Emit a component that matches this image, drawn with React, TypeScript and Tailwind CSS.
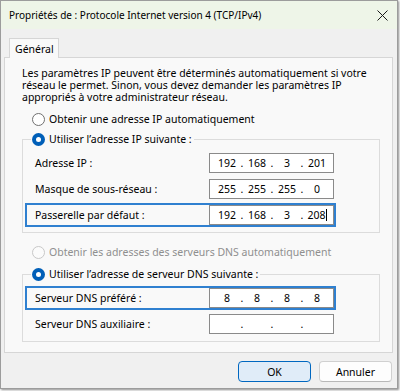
import React from "react";

function Radio({ checked, disabled }: { checked?: boolean; disabled?: boolean }) {
  if (checked) {
    return (
      <span className="w-[13px] h-[13px] rounded-full bg-[#005fb8] flex items-center justify-center shrink-0">
        <span className="w-[5px] h-[5px] rounded-full bg-white" />
      </span>
    );
  }
  return (
    <span
      className={
        disabled
          ? "w-[13px] h-[13px] rounded-full border border-[#c8c8c8] bg-[#fbfbfb] shrink-0"
          : "w-[13px] h-[13px] rounded-full border border-[#707070] bg-white shrink-0"
      }
    />
  );
}

function IpInput({ octets, caret }: { octets: string[]; caret?: boolean }) {
  const slot = (v: string, last: boolean) => (
    <span className="w-[22px] flex justify-center items-center">
      <span>{v}</span>
      {last && caret ? <span className="w-[1px] h-[12px] bg-black" /> : null}
    </span>
  );
  return (
    <div className="w-[125px] h-[20px] border border-[#8a8a8a] bg-white flex items-center pl-[6px]">
      {slot(octets[0], false)}
      <span className="w-[8px] text-center">.</span>
      {slot(octets[1], false)}
      <span className="w-[8px] text-center">.</span>
      {slot(octets[2], false)}
      <span className="w-[8px] text-center">.</span>
      {slot(octets[3], true)}
    </div>
  );
}

function Row({
  label,
  octets,
  highlight,
  caret,
}: {
  label: string;
  octets: string[];
  highlight?: boolean;
  caret?: boolean;
}) {
  return (
    <div
      className={
        highlight
          ? "ml-[2px] w-[311px] h-[24px] border-2 border-[#2f80d0] flex items-center"
          : "ml-[2px] w-[311px] h-[24px] border-2 border-transparent flex items-center"
      }
    >
      <span className="w-[182px] pl-[8px]">{label}</span>
      <IpInput octets={octets} caret={caret} />
    </div>
  );
}

export default function App() {
  return (
    <div
      className="w-[400px] h-[391px] bg-white text-[10.5px] text-black leading-[12px]"
      style={{ fontFamily: '"Noto Sans", "Open Sans", sans-serif' }}
    >
      <div className="w-[398px] h-[389px] border border-[#9c9c9c] shadow-[1px_1px_2px_rgba(0,0,0,0.45)] flex flex-col bg-[#f0f0f0]">
        {/* Title bar */}
        <div className="h-[28px] bg-[#eef5e8] flex items-center pl-[8px] pr-[9px] shrink-0">
          <span className="flex-1 text-[10px]">Propriétés de : Protocole Internet version 4 (TCP/IPv4)</span>
          <svg width="11" height="11" viewBox="0 0 11 11">
            <path d="M0.5 0.5 L10.5 10.5 M10.5 0.5 L0.5 10.5" stroke="#1a1a1a" strokeWidth="1" />
          </svg>
        </div>

        {/* Body */}
        <div className="flex-1 flex flex-col pl-[3px] pr-[4px] pt-[9px]">
          {/* Tab */}
          <div className="flex">
            <div className="ml-[5px] h-[20px] w-[50px] border border-b-0 border-[#d6d6d6] bg-[#f9f9f9] flex items-center pl-[5px] -mb-[1px] relative z-10">
              Général
            </div>
          </div>
          {/* Panel */}
          <div className="h-[296px] border border-[#d6d6d6] bg-[#f9f9f9] flex flex-col">
            <div className="pl-[17px] pt-[9px] flex flex-col">
              <span className="h-[12px] leading-[12px]">Les paramètres IP peuvent être déterminés automatiquement si votre</span>
              <span className="h-[12px] leading-[12px]">réseau le permet. Sinon, vous devez demander les paramètres IP</span>
              <span className="h-[12px] leading-[12px]">appropriés à votre administrateur réseau.</span>
            </div>

            <div className="mt-[8px] h-[16px] pl-[27px] flex items-center gap-[4px]">
              <Radio />
              <span>Obtenir une adresse IP automatiquement</span>
            </div>

            <fieldset className="mt-[4px] ml-[17px] w-[358px] border border-[#dcdcdc] pt-[4px] pb-[5px]">
              <legend className="ml-[8px] pl-[1px] pr-[2px] h-[16px] flex items-center gap-[4px]">
                <Radio checked />
                <span>Utiliser l’adresse IP suivante :</span>
              </legend>
              <div className="flex flex-col gap-[2px]">
                <Row label="Adresse IP :" octets={["192", "168", "3", "201"]} />
                <Row label="Masque de sous-réseau :" octets={["255", "255", "255", "0"]} />
                <Row label="Passerelle par défaut :" octets={["192", "168", "3", "208"]} highlight caret />
              </div>
            </fieldset>

            <div className="mt-[11px] h-[16px] pl-[27px] flex items-center gap-[4px] text-[#8f8f8f]">
              <Radio disabled />
              <span>Obtenir les adresses des serveurs DNS automatiquement</span>
            </div>

            <fieldset className="mt-[6px] ml-[17px] w-[358px] border border-[#dcdcdc] pt-[4px] pb-[5px]">
              <legend className="ml-[8px] pl-[1px] pr-[2px] h-[16px] flex items-center gap-[4px]">
                <Radio checked />
                <span>Utiliser l’adresse de serveur DNS suivante :</span>
              </legend>
              <div className="flex flex-col gap-[2px]">
                <Row label="Serveur DNS préféré :" octets={["8", "8", "8", "8"]} highlight />
                <Row label="Serveur DNS auxiliaire :" octets={["", "", "", ""]} />
              </div>
            </fieldset>
          </div>

          {/* Buttons */}
          <div className="mt-[8px] flex justify-end gap-[8px] pr-[1px]">
            <button className="w-[73px] h-[21px] rounded-[4px] border border-[#0067c0] bg-[#e0ecf8] flex items-center justify-center">
              OK
            </button>
            <button className="w-[73px] h-[21px] rounded-[4px] border border-[#d0d0d0] border-b-[#b8b8b8] bg-[#fdfdfd] flex items-center justify-center">
              Annuler
            </button>
          </div>
        </div>
      </div>
    </div>
  );
}
